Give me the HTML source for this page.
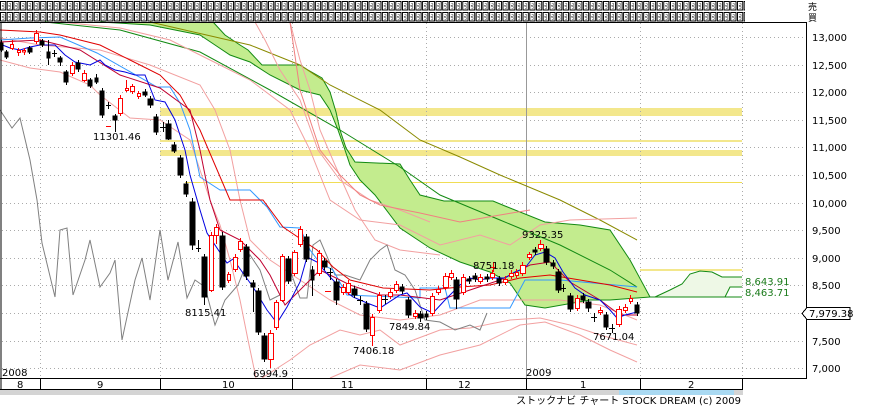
<!DOCTYPE html>
<html><head><meta charset="utf-8"><style>
html,body{margin:0;padding:0;background:#fff;width:870px;height:406px;overflow:hidden}
svg{display:block}
text{font-family:"DejaVu Sans","Liberation Sans","Noto Sans CJK JP",sans-serif;font-size:10px;fill:#000}
</style></head><body>
<svg width="870" height="406" viewBox="0 0 870 406" xmlns="http://www.w3.org/2000/svg" shape-rendering="crispEdges">
<defs>
<pattern id="tofu" x="0" y="0" width="6.7" height="11" patternUnits="userSpaceOnUse">
<rect x="0.5" y="1.5" width="5.2" height="8.5" fill="#fff" stroke="#000" stroke-width="1"/>
<path d="M2.2 3.5h2v1.5h-2v1.5h2v1.5h-2" fill="none" stroke="#000" stroke-width="0.8"/>
</pattern>
</defs>

<rect x="0" y="0" width="745" height="11" fill="url(#tofu)"/>
<rect x="0" y="11" width="745" height="11" fill="url(#tofu)"/>
<text x="808" y="10" style="font-size:9px">売</text>
<text x="808" y="21" style="font-size:9px">買</text>

<rect x="160" y="108" width="582" height="8" fill="#f3e78c"/>
<rect x="160" y="140" width="582" height="2" fill="#f3e78c"/>
<rect x="160" y="150" width="582" height="6" fill="#f3e78c"/>
<line x1="185" y1="182.5" x2="742" y2="182.5" stroke="#f0dd55"/>
<rect x="640" y="269" width="102" height="2" fill="#f3e78c"/>

<g stroke="#aaa" stroke-dasharray="1,3">
<line x1="2" y1="37.5" x2="806" y2="37.5"/><line x1="2" y1="65.5" x2="806" y2="65.5"/>
<line x1="2" y1="92.5" x2="806" y2="92.5"/><line x1="2" y1="120.5" x2="806" y2="120.5"/>
<line x1="2" y1="147.5" x2="806" y2="147.5"/><line x1="2" y1="175.5" x2="806" y2="175.5"/>
<line x1="2" y1="203.5" x2="806" y2="203.5"/><line x1="2" y1="230.5" x2="806" y2="230.5"/>
<line x1="2" y1="258.5" x2="806" y2="258.5"/><line x1="2" y1="285.5" x2="806" y2="285.5"/>
<line x1="2" y1="313.5" x2="806" y2="313.5"/><line x1="2" y1="341.5" x2="806" y2="341.5"/>
<line x1="2" y1="368.5" x2="806" y2="368.5"/>
<line x1="40.5" y1="23" x2="40.5" y2="378"/><line x1="160.5" y1="23" x2="160.5" y2="378"/>
<line x1="292.5" y1="23" x2="292.5" y2="378"/><line x1="426.5" y1="23" x2="426.5" y2="378"/>
<line x1="640.5" y1="23" x2="640.5" y2="378"/><line x1="742.5" y1="23" x2="742.5" y2="378"/>
</g>
<line x1="526.5" y1="23" x2="526.5" y2="378" stroke="#999"/>

<g shape-rendering="auto">
<polygon fill="#c3ec8e" points="45,22 213,22 225,35 240,45 248,50 262,65 300,65 308,70 322,78 330,92 336,112 340,130 346,148 355,162 400,164 410,180 420,195 444,201 493,201 505,206 545,222 580,225 610,230 630,260 650,297 655,297 610,300 590,300 545,308 525,305 510,283 490,272 460,262 430,248 400,228 375,195 360,180 350,165 345,150 338,130 330,110 320,95 300,90 270,75 250,62 230,55 215,45 200,35 150,25 100,22"/>
<polygon fill="#eef8e6" points="655,297 670,290 682,284 690,274 700,271 712,272 722,277 742,277 742,287 730,287 725,297"/>
<polyline fill="none" stroke="#138a13" points="213,22 225,35 240,45 248,50 262,65 300,65 308,70 322,78 330,92 336,112 340,130 346,148 355,162 400,164 410,180 420,195 444,201 493,201 505,206 545,222 580,225 610,230 630,260 650,297 742,297"/>
<polyline fill="none" stroke="#138a13" points="655,297 670,290 682,284 690,274 700,271 712,272 722,277 742,277"/>
<polyline fill="none" stroke="#138a13" points="742,287 730,287 725,297"/>
<polyline fill="none" stroke="#138a13" points="100,22 150,25 200,35 215,45 230,55 250,62 270,75 300,90 320,95 330,110 338,130 345,150 350,165 360,180 375,195 400,228 430,248 460,262 490,272 510,283 525,305 545,308 590,300 610,300 650,297"/>
<polyline fill="none" stroke="#138a13" points="45,22 120,30 200,52 270,90 340,130 400,167 440,195 500,220 560,245 610,270 637,287"/>
<polyline fill="none" stroke="#8a8a00" points="150,22 250,45 300,65 330,85 380,110 420,140 460,157 500,175 560,200 600,220 637,240"/>

<g fill="none" stroke="#f2a0a0">
<polyline points="0,60 30,68 60,72 90,85 100,95 130,118 160,120 190,140 200,170 210,200 220,225 230,260 240,300 248,340 256,378"/>
<polyline points="0,38 40,45 100,50 150,65 200,85 215,110 230,150 240,200 250,240 270,260 300,280 330,300 360,315 400,320 440,315 480,300 520,300 560,300 600,305 637,320"/>
<polyline points="60,22 120,28 170,40 210,60 250,80 290,110 310,150 330,200 360,220 400,225 440,245 480,235 510,245 540,225 570,220 637,218"/>
<polyline points="290,22 300,60 310,90 320,130 335,165 355,210 375,240 400,250 440,255"/>
<polyline points="255,22 265,40 280,70 300,100 318,150 340,180 370,200 400,210 430,222"/>
<polyline points="262,378 290,360 310,345 340,330 360,335 380,330 400,345 440,330 470,328 510,320 540,318 570,325 600,335 637,345"/>
<polyline points="330,378 360,365 400,370 440,355 480,345 520,325 545,322 580,335 610,350 637,362"/>
</g>
<polyline fill="none" stroke="#f08080" points="290,22 300,90 320,150 340,175 360,195 380,205 420,213 460,222 500,215 530,210"/>

<polyline fill="none" stroke="#808080" points="0,110 12,128 20,118 30,160 37,200 42,243 55,297 60,230 67,228 73,295 85,260 90,240 100,287 110,273 115,260 122,340 135,280 142,258 150,300 160,230 168,280 178,242 187,298 195,280 205,287 215,325 225,300 238,285 250,255 260,270 270,300 280,295 290,270 300,298 307,298 313,245 320,240 335,275 345,275 360,280 370,260 380,250 387,245 395,270 405,275 415,290 425,320 440,322 455,330 470,325 480,330 487,313"/>

<polyline fill="none" stroke="#3399ff" points="0,40 30,38 60,37 97,53 157,87 170,87 180,103 190,130 200,177 220,190 250,190 267,207 280,227 300,228 310,250 320,263 333,270 347,295 420,298 420,288 445,288 450,308 510,308 525,280 560,280 637,287"/>
<polyline fill="none" stroke="#e00000" points="0,30 40,32 60,35 100,45 130,60 160,75 180,95 200,130 215,165 230,200 263,200 283,227 317,250 333,267 350,280 383,288 430,290 460,287 490,285 520,278 550,275 580,280 610,285 637,292"/>
<polyline fill="none" stroke="#c00030" points="0,42 40,40 80,50 120,75 160,88 190,110 200,150 210,200 220,230 240,240 260,260 270,275 285,305 300,290 320,270 350,285 380,295 400,295 440,300 470,290 500,280 530,265 550,262 570,282 600,300 620,315 637,315"/>
<polyline fill="none" stroke="#0000e0" points="0,44 10,48 20,50 30,47 40,45 55,45 65,55 75,62 90,65 100,60 105,65 115,70 125,72 135,75 145,75 155,100 165,102 175,120 185,150 190,175 200,210 207,233 227,263 233,259 253,287 267,310 277,323 287,307 300,282 307,257 317,262 330,277 340,287 353,297 367,303 380,308 400,295 407,293 420,307 433,313 445,300 460,285 470,278 480,280 490,278 505,278 515,272 525,268 535,255 545,252 555,258 563,272 575,288 585,295 600,300 610,310 617,318 625,315 637,312"/>
</g>

<g stroke-width="1">
<g stroke="#000" fill="#000">
<line x1="1.5" y1="40" x2="1.5" y2="52"/><rect x="0" y="43" width="3" height="7"/>
<line x1="6.5" y1="50" x2="6.5" y2="59"/><rect x="5" y="52" width="3" height="5"/>
<line x1="29.5" y1="46" x2="29.5" y2="54"/><rect x="28" y="48" width="4" height="4"/>
<line x1="42.5" y1="39" x2="42.5" y2="47"/><rect x="40" y="41" width="4" height="4"/>
<line x1="48.5" y1="40" x2="48.5" y2="65"/><rect x="47" y="52" width="3" height="6"/>
<line x1="52" y1="53.5" x2="57" y2="53.5"/><line x1="54.5" y1="50" x2="54.5" y2="57"/>
<line x1="60.5" y1="56" x2="60.5" y2="66"/><rect x="58" y="58" width="4" height="4"/>
<line x1="66.5" y1="70" x2="66.5" y2="85"/><rect x="64" y="72" width="4" height="10"/>
<line x1="78.5" y1="60" x2="78.5" y2="72"/><rect x="76" y="63" width="4" height="6"/>
<line x1="90.5" y1="78" x2="90.5" y2="88"/><rect x="88" y="80" width="4" height="6"/>
<line x1="96.5" y1="74" x2="96.5" y2="84"/><rect x="95" y="78" width="3" height="4"/>
<line x1="102.5" y1="88" x2="102.5" y2="118"/><rect x="100" y="91" width="4" height="24"/>
<line x1="106" y1="105.5" x2="111" y2="105.5"/><line x1="108.5" y1="102" x2="108.5" y2="109"/>
<line x1="115.5" y1="114" x2="115.5" y2="132"/><rect x="113" y="116" width="4" height="4"/>
<line x1="145.5" y1="89" x2="145.5" y2="97"/><rect x="143" y="92" width="4" height="3"/>
<line x1="150.5" y1="96" x2="150.5" y2="108"/><rect x="148" y="99" width="5" height="6"/>
<line x1="156.5" y1="114" x2="156.5" y2="135"/><rect x="154" y="117" width="4" height="15"/>
<line x1="160" y1="127.5" x2="166" y2="127.5"/><line x1="163.5" y1="122" x2="163.5" y2="132"/>
<line x1="168.5" y1="120" x2="168.5" y2="140"/><rect x="166" y="124" width="5" height="15"/>
<line x1="174.5" y1="142" x2="174.5" y2="153"/><rect x="172" y="145" width="4" height="6"/>
<line x1="180.5" y1="155" x2="180.5" y2="178"/><rect x="178" y="158" width="5" height="17"/>
<line x1="186.5" y1="181" x2="186.5" y2="197"/><rect x="184" y="184" width="4" height="10"/>
<line x1="192.5" y1="198" x2="192.5" y2="250"/><rect x="190" y="202" width="5" height="43"/>
<line x1="196" y1="248.5" x2="201" y2="248.5"/><line x1="198.5" y1="240" x2="198.5" y2="252"/>
<line x1="204.5" y1="254" x2="204.5" y2="305"/><rect x="202" y="257" width="5" height="40"/>
<line x1="222.5" y1="232" x2="222.5" y2="290"/><rect x="220" y="236" width="5" height="51"/>
<line x1="246.5" y1="244" x2="246.5" y2="280"/><rect x="244" y="247" width="5" height="29"/>
<line x1="253.5" y1="280" x2="253.5" y2="312"/><rect x="251" y="283" width="4" height="4"/>
<line x1="258.5" y1="288" x2="258.5" y2="335"/><rect x="256" y="291" width="5" height="41"/>
<line x1="264.5" y1="333" x2="264.5" y2="362"/><rect x="262" y="336" width="5" height="23"/>
<line x1="288.5" y1="256" x2="288.5" y2="284"/><rect x="286" y="259" width="5" height="22"/>
<line x1="306.5" y1="234" x2="306.5" y2="262"/><rect x="304" y="237" width="5" height="22"/>
<line x1="312.5" y1="266" x2="312.5" y2="296"/><rect x="311" y="270" width="3" height="10"/>
<line x1="324.5" y1="258" x2="324.5" y2="270"/><rect x="322" y="261" width="5" height="6"/>
<line x1="327" y1="272.5" x2="333" y2="272.5"/><line x1="330.5" y1="268" x2="330.5" y2="280"/>
<line x1="336.5" y1="279" x2="336.5" y2="305"/><rect x="334" y="282" width="5" height="18"/>
<line x1="354.5" y1="286" x2="354.5" y2="298"/><rect x="352" y="289" width="5" height="6"/>
<line x1="357" y1="300.5" x2="363" y2="300.5"/><line x1="360.5" y1="296" x2="360.5" y2="305"/>
<line x1="366.5" y1="301" x2="366.5" y2="332"/><rect x="364" y="304" width="5" height="25"/>
<line x1="382" y1="299.5" x2="388" y2="299.5"/><line x1="385.5" y1="295" x2="385.5" y2="304"/>
<line x1="402.5" y1="284" x2="402.5" y2="294"/><rect x="400" y="287" width="4" height="4"/>
<line x1="408.5" y1="297" x2="408.5" y2="318"/><rect x="406" y="300" width="5" height="15"/>
<line x1="420.5" y1="311" x2="420.5" y2="322"/><rect x="418" y="314" width="5" height="4"/>
<line x1="426.5" y1="311" x2="426.5" y2="320"/><rect x="425" y="314" width="3" height="3"/>
<line x1="456.5" y1="277" x2="456.5" y2="309"/><rect x="454" y="280" width="5" height="19"/>
<line x1="469.5" y1="276" x2="469.5" y2="284"/><rect x="467" y="279" width="4" height="2"/>
<line x1="475.5" y1="273" x2="475.5" y2="282"/><rect x="473" y="276" width="4" height="3"/>
<line x1="487.5" y1="274" x2="487.5" y2="282"/><rect x="485" y="277" width="4" height="2"/>
<line x1="499.5" y1="276" x2="499.5" y2="286"/><rect x="497" y="279" width="4" height="4"/>
<line x1="535.5" y1="247" x2="535.5" y2="255"/><rect x="533" y="250" width="4" height="2"/>
<line x1="546.5" y1="246" x2="546.5" y2="265"/><rect x="544" y="249" width="5" height="13"/>
<line x1="553.5" y1="260" x2="553.5" y2="269"/><rect x="551" y="263" width="4" height="3"/>
<line x1="558.5" y1="269" x2="558.5" y2="293"/><rect x="556" y="272" width="5" height="18"/>
<line x1="560" y1="288.5" x2="566" y2="288.5"/><line x1="563.5" y1="284" x2="563.5" y2="292"/>
<line x1="570.5" y1="293" x2="570.5" y2="312"/><rect x="568" y="296" width="5" height="13"/>
<line x1="583.5" y1="293" x2="583.5" y2="303"/><rect x="581" y="296" width="4" height="4"/>
<line x1="588.5" y1="299" x2="588.5" y2="312"/><rect x="586" y="302" width="5" height="6"/>
<line x1="591" y1="317.5" x2="597" y2="317.5"/><line x1="594.5" y1="313" x2="594.5" y2="322"/>
<line x1="606.5" y1="312" x2="606.5" y2="330"/><rect x="604" y="315" width="4" height="12"/>
<line x1="609" y1="328.5" x2="615" y2="328.5"/><line x1="612.5" y1="324" x2="612.5" y2="333"/>
<line x1="637.5" y1="302" x2="637.5" y2="316"/><rect x="635" y="305" width="4" height="8"/>
</g>
<g stroke="#f00" fill="#fff">
<line x1="12.5" y1="40" x2="12.5" y2="50"/><rect x="10.5" y="44.5" width="3" height="4"/>
<line x1="18.5" y1="48" x2="18.5" y2="56"/><rect x="17.5" y="50.5" width="3" height="2"/>
<line x1="24.5" y1="48" x2="24.5" y2="55"/><rect x="22.5" y="50.5" width="3" height="1.5"/>
<line x1="36.5" y1="30" x2="36.5" y2="44"/><rect x="34.5" y="33.5" width="4" height="8"/>
<line x1="72.5" y1="62" x2="72.5" y2="76"/><rect x="70.5" y="65.5" width="4" height="8"/>
<line x1="84.5" y1="70" x2="84.5" y2="82"/><rect x="82.5" y="73.5" width="4" height="7"/>
<line x1="120.5" y1="95" x2="120.5" y2="116"/><rect x="118.5" y="98.5" width="4" height="15"/>
<line x1="126.5" y1="80" x2="126.5" y2="92"/><rect x="125.5" y="88.5" width="3" height="2"/>
<line x1="132.5" y1="84" x2="132.5" y2="94"/><rect x="130.5" y="86.5" width="4" height="5"/>
<line x1="138.5" y1="91" x2="138.5" y2="99"/><rect x="137.5" y="93.5" width="3" height="3"/>
<line x1="211.5" y1="232" x2="211.5" y2="292"/><rect x="209.5" y="235.5" width="4" height="55"/>
<line x1="216.5" y1="224" x2="216.5" y2="244"/><rect x="214.5" y="227.5" width="4" height="8"/>
<line x1="228.5" y1="272" x2="228.5" y2="283"/><rect x="227.5" y="274.5" width="3" height="6"/>
<line x1="235.5" y1="254" x2="235.5" y2="272"/><rect x="233.5" y="257.5" width="4" height="12"/>
<line x1="240.5" y1="238" x2="240.5" y2="252"/><rect x="238.5" y="241.5" width="4" height="8"/>
<line x1="270.5" y1="330" x2="270.5" y2="368"/><rect x="268.5" y="333.5" width="5" height="26"/>
<line x1="276.5" y1="300" x2="276.5" y2="330"/><rect x="274.5" y="302.5" width="4" height="25"/>
<line x1="282.5" y1="254" x2="282.5" y2="302"/><rect x="280.5" y="256.5" width="4" height="44"/>
<line x1="294.5" y1="250" x2="294.5" y2="276"/><rect x="292.5" y="252.5" width="5" height="21"/>
<line x1="300.5" y1="226" x2="300.5" y2="247"/><rect x="298.5" y="229.5" width="4" height="15"/>
<line x1="319.5" y1="250" x2="319.5" y2="276"/><rect x="317.5" y="253.5" width="4" height="20"/>
<line x1="343.5" y1="284" x2="343.5" y2="295"/><rect x="341.5" y="287.5" width="4" height="5"/>
<line x1="348.5" y1="280" x2="348.5" y2="295"/><rect x="346.5" y="283.5" width="4" height="9"/>
<line x1="372.5" y1="314" x2="372.5" y2="346"/><rect x="370.5" y="317.5" width="4" height="18"/>
<line x1="379.5" y1="292" x2="379.5" y2="313"/><rect x="377.5" y="295.5" width="4" height="15"/>
<line x1="390.5" y1="289" x2="390.5" y2="299"/><rect x="388.5" y="292.5" width="4" height="4"/>
<line x1="396.5" y1="281" x2="396.5" y2="293"/><rect x="394.5" y="284.5" width="4" height="6"/>
<line x1="415.5" y1="310" x2="415.5" y2="319"/><rect x="413.5" y="313.5" width="4" height="3"/>
<line x1="432.5" y1="293" x2="432.5" y2="316"/><rect x="430.5" y="296.5" width="4" height="17"/>
<line x1="438.5" y1="286" x2="438.5" y2="295"/><rect x="436.5" y="289.5" width="4" height="3"/>
<line x1="445.5" y1="273" x2="445.5" y2="290"/><rect x="443.5" y="276.5" width="5" height="11"/>
<line x1="451.5" y1="270" x2="451.5" y2="280"/><rect x="449.5" y="273.5" width="4" height="4"/>
<line x1="463.5" y1="274" x2="463.5" y2="295"/><rect x="461.5" y="277.5" width="4" height="15"/>
<line x1="480.5" y1="274" x2="480.5" y2="284"/><rect x="478.5" y="277.5" width="4" height="4"/>
<line x1="492.5" y1="270" x2="492.5" y2="280"/><rect x="490.5" y="273.5" width="4" height="4"/>
<line x1="505.5" y1="276" x2="505.5" y2="285"/><rect x="503.5" y="279.5" width="4" height="3"/>
<line x1="511.5" y1="270" x2="511.5" y2="279"/><rect x="509.5" y="273.5" width="4" height="3"/>
<line x1="516.5" y1="269" x2="516.5" y2="278"/><rect x="515.5" y="272.5" width="3" height="3"/>
<line x1="522.5" y1="262" x2="522.5" y2="276"/><rect x="520.5" y="265.5" width="5" height="8"/>
<line x1="529.5" y1="252" x2="529.5" y2="260"/><rect x="527.5" y="254.5" width="4" height="3"/>
<line x1="540.5" y1="240" x2="540.5" y2="251"/><rect x="538.5" y="244.5" width="5" height="4"/>
<line x1="577.5" y1="295" x2="577.5" y2="311"/><rect x="575.5" y="298.5" width="4" height="10"/>
<line x1="600.5" y1="307" x2="600.5" y2="315"/><rect x="598.5" y="310.5" width="4" height="2"/>
<line x1="619.5" y1="306" x2="619.5" y2="327"/><rect x="616.5" y="309.5" width="5" height="15"/>
<line x1="625.5" y1="304" x2="625.5" y2="313"/><rect x="623.5" y="307.5" width="4" height="3"/>
<line x1="630.5" y1="295" x2="630.5" y2="304"/><rect x="629.5" y="298.5" width="3" height="3"/>
</g>
<g stroke="#f00"><line x1="106" y1="126.5" x2="111" y2="126.5"/>
<line x1="325" y1="291.5" x2="331" y2="291.5"/>
<line x1="490" y1="267.5" x2="496" y2="267.5"/><line x1="493.5" y1="262" x2="493.5" y2="272"/></g>
</g>

<text x="93" y="140">11301.46</text>
<text x="185" y="316">8115.41</text>
<text x="253" y="377">6994.9</text>
<text x="353" y="354">7406.18</text>
<text x="389" y="330">7849.84</text>
<text x="473" y="269">8751.18</text>
<text x="522" y="238">9325.35</text>
<text x="593" y="340">7671.04</text>
<text x="2" y="376">2008</text>
<text x="526" y="376">2009</text>
<text x="745" y="285" style="fill:#1a7a1a">8,643.91</text>
<text x="745" y="296" style="fill:#1a7a1a">8,463.71</text>

<g stroke="#000" fill="none">
<line x1="0" y1="22.5" x2="807" y2="22.5"/>
<line x1="1" y1="22" x2="1" y2="390"/>
<line x1="806.5" y1="22" x2="806.5" y2="379"/>
<line x1="0" y1="378.5" x2="807" y2="378.5"/>
<line x1="0" y1="389.5" x2="743" y2="389.5"/>
<line x1="40.5" y1="378" x2="40.5" y2="390"/><line x1="160.5" y1="378" x2="160.5" y2="390"/>
<line x1="292.5" y1="378" x2="292.5" y2="390"/><line x1="426.5" y1="378" x2="426.5" y2="390"/>
<line x1="526.5" y1="378" x2="526.5" y2="390"/><line x1="640.5" y1="378" x2="640.5" y2="390"/>
<line x1="742.5" y1="378" x2="742.5" y2="390"/>
</g>
<text x="17" y="388">8</text><text x="97" y="388">9</text><text x="222" y="388">10</text>
<text x="341" y="388">11</text><text x="458" y="388">12</text><text x="580" y="388">1</text><text x="688" y="388">2</text>
<rect x="0" y="390" width="743" height="5" fill="#d4d4d4"/>
<rect x="619" y="390" width="115" height="5" fill="#a9d9f2"/>
<text x="741" y="404" text-anchor="end">ストックナビ チャート STOCK DREAM (c) 2009</text>

<text x="812" y="41">13,000</text><text x="812" y="69">12,500</text><text x="812" y="96">12,000</text>
<text x="812" y="124">11,500</text><text x="812" y="151">11,000</text><text x="812" y="179">10,500</text>
<text x="812" y="207">10,000</text><text x="812" y="234">9,500</text><text x="812" y="262">9,000</text>
<text x="812" y="289">8,500</text><text x="812" y="345">7,500</text><text x="812" y="372">7,000</text>
<polygon points="802,313.5 807,307.5 850,307.5 850,319.5 807,319.5" fill="#fff" stroke="#000"/>
<text x="809" y="317">7,979.38</text>
</svg>
</body></html>
